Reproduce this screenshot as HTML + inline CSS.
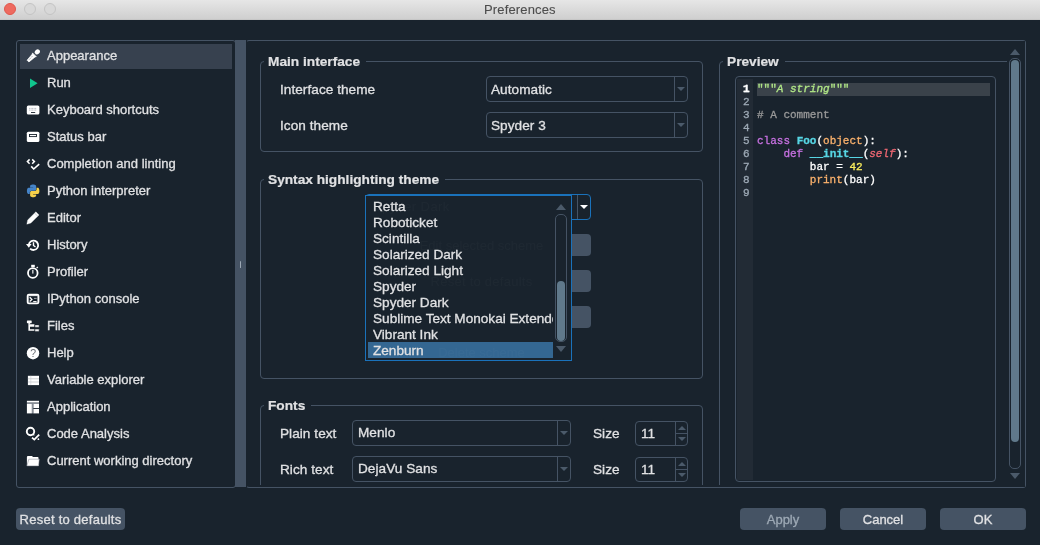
<!DOCTYPE html>
<html><head><meta charset="utf-8">
<style>
*{margin:0;padding:0;box-sizing:border-box}
html,body{width:1040px;height:545px;overflow:hidden;background:#19232D}
body{position:relative;will-change:transform;font-family:"Liberation Sans",sans-serif;font-size:13px;color:#E0E1E3}
.t,.btn,.code{-webkit-text-stroke:0.3px currentColor}
.a{position:absolute}
.t{position:absolute;white-space:nowrap;line-height:15px;height:15px}
.b{font-weight:bold}
.r{font-size:13.6px;letter-spacing:0.05px}
.titlebar{left:0;top:0;width:1040px;height:20px;background:linear-gradient(#E6E6E6,#CFCFCF);border-bottom:1px solid #C6C6C6}
.tl{position:absolute;top:3px;width:12px;height:12px;border-radius:50%}
.frame{position:absolute;border:1px solid #455364;border-radius:3px}
.grp{position:absolute;border:1px solid #455364;border-radius:4px}
.gtitle{position:absolute;background:#19232D;padding:0 6px 0 4px;font-weight:bold;font-size:13.7px;-webkit-text-stroke:0.2px currentColor;line-height:15px;white-space:nowrap}
.combo{position:absolute;border:1px solid #455364;border-radius:4px;height:26px}
.combo .sep{position:absolute;top:0;bottom:0;width:1px;background:#455364}
.arr{position:absolute;width:0;height:0;border-left:4px solid transparent;border-right:4px solid transparent;border-top:4px solid #4B5A6A}
.btn{position:absolute;background:#455364;border-radius:4px;height:22px;text-align:center;line-height:23px}
.code{position:absolute;font-family:"Liberation Mono",monospace;font-size:11px;line-height:13px;white-space:pre}
svg{position:absolute;overflow:visible}
</style></head><body>

<!-- title bar -->
<div class="a titlebar"></div>
<div class="tl" style="left:4px;background:#EE6A5F;border:1px solid #E0574C"></div>
<div class="tl" style="left:24px;background:#D8D8D8;border:1px solid #C4C4C4"></div>
<div class="tl" style="left:44px;background:#D8D8D8;border:1px solid #C4C4C4"></div>
<div class="t" style="left:484px;top:2px;color:#4D4D4D;letter-spacing:0.15px;-webkit-text-stroke:0.1px #4D4D4D">Preferences</div>

<!-- sidebar -->
<div class="frame" style="left:16px;top:40px;width:220px;height:448px"></div>
<div class="a" style="left:20px;top:44px;width:212px;height:25px;background:#37414F"></div>
<svg style="left:0;top:0" width="240" height="545" viewBox="0 0 240 545">
<g fill="#fff" stroke="none">
<!-- appearance eyedropper -->
<polygon points="32.5,52.9 36.3,56.7 35.1,56.9 28.9,62.0 27.1,60.2 32.3,54.1" stroke="#fff" stroke-width="0.7" stroke-linejoin="round"/>
<ellipse cx="37.3" cy="51.9" rx="2.3" ry="2.8" transform="rotate(45 37.3 51.9)"/>
<line x1="34.5" y1="53.1" x2="35.9" y2="54.5" stroke="#37414F" stroke-width="0.5"/>
<line x1="28.8" y1="59.9" x2="32.6" y2="56.1" stroke="#5b6470" stroke-width="0.7" stroke-dasharray="0.8 0.6"/>
<!-- run -->
<polygon points="30,78.5 37.6,83.2 30,88" fill="#10C58D"/>
<!-- keyboard -->
<rect x="26.8" y="105.4" width="12.6" height="9.2" rx="1.6"/>
<line x1="29.2" y1="108.4" x2="36.8" y2="108.4" stroke="#9aa0a8" stroke-width="0.8" stroke-dasharray="0.9 0.6"/>
<line x1="29.2" y1="110.1" x2="36.8" y2="110.1" stroke="#9aa0a8" stroke-width="0.8" stroke-dasharray="0.9 0.6"/>
<line x1="31" y1="112.5" x2="35.2" y2="112.5" stroke="#19232D" stroke-width="0.9"/>
<!-- status bar -->
<rect x="26.8" y="131.7" width="12.6" height="10.4" rx="1.6"/>
<rect x="29.5" y="134.5" width="7" height="2.1" fill="none" stroke="#19232D" stroke-width="0.9"/>
<!-- completion -->
<polyline points="29.6,159.4 27.4,161.6 29.6,163.8" fill="none" stroke="#fff" stroke-width="1.5"/>
<polyline points="32.2,159.4 34.4,161.6 32.2,163.8" fill="none" stroke="#fff" stroke-width="1.5"/>
<polyline points="31.2,166.4 33.7,169 39.2,164.1" fill="none" stroke="#fff" stroke-width="1.6"/>
<!-- python -->
<g transform="translate(26.8,184.6) scale(0.1145)">
<path fill="#4584C8" d="M54.9,0.0 C50.3,0.0 46.0,0.4 42.2,1.1 C30.9,3.1 28.9,7.2 28.9,14.9 V25.1 H55.4 V28.5 H28.9 H19.0 C11.3,28.5 4.6,33.1 2.5,41.9 C0.1,52.0 0.0,58.3 2.5,68.8 C4.4,76.7 8.9,82.3 16.6,82.3 H25.7 V70.3 C25.7,61.5 33.3,53.8 42.2,53.8 H68.7 C76.0,53.8 81.9,47.7 81.9,40.4 V14.9 C81.9,7.7 75.8,2.3 68.7,1.1 C64.1,0.3 59.4,0.0 54.9,0.0 Z"/>
<path fill="#F6D04A" d="M85.3,28.5 V40.2 C85.3,49.3 77.6,56.9 68.7,56.9 H42.2 C34.9,56.9 28.9,63.1 28.9,70.3 V95.6 C28.9,102.8 35.2,107.1 42.2,109.1 C50.6,111.6 58.7,112.0 68.7,109.1 C75.4,107.2 81.9,103.3 81.9,95.6 V85.5 H55.4 V82.1 H81.9 H95.2 C102.9,82.1 105.8,76.7 108.4,68.8 C111.2,60.6 111.0,52.8 108.4,41.9 C106.5,34.1 102.9,28.5 95.2,28.5 Z"/>
</g>
<!-- editor pencil -->
<polygon points="26.8,224.2 27.7,219.9 35.9,211.8 39.0,214.9 30.9,223.1" stroke="#fff" stroke-width="0.3" stroke-linejoin="round"/>
<line x1="34.7" y1="213.2" x2="37.6" y2="216.1" stroke="#8a9099" stroke-width="0.5"/>
<!-- history -->
<path d="M28.8,244.6 A4.7,4.7 0 1 1 30.1,248.6" fill="none" stroke="#fff" stroke-width="1.8"/>
<polygon points="26.0,244.0 31.6,244.0 28.8,247.8"/>
<polyline points="33.5,242.2 33.5,245.5 35.5,247.0" fill="none" stroke="#fff" stroke-width="1.4"/>
<!-- profiler -->
<circle cx="32.8" cy="273" r="4.8" fill="none" stroke="#fff" stroke-width="1.8"/>
<rect x="31.2" y="264.8" width="3.6" height="2.4"/>
<rect x="32.3" y="269.8" width="1.1" height="3.8"/>
<line x1="36.6" y1="268.2" x2="37.8" y2="267" stroke="#fff" stroke-width="1.2"/>
<!-- ipython console -->
<rect x="27.7" y="294.6" width="10.7" height="8.8" rx="1.2" fill="none" stroke="#fff" stroke-width="1.9"/>
<rect x="28.6" y="295.2" width="8.9" height="0.9"/>
<polyline points="29.7,297.3 31.9,299.4 29.7,301.5" fill="none" stroke="#fff" stroke-width="1.3"/>
<line x1="33.2" y1="301.6" x2="36.6" y2="301.6" stroke="#fff" stroke-width="1.1"/>
<line x1="34.0" y1="298.4" x2="36.6" y2="298.4" stroke="#ddd" stroke-width="0.7"/>
<!-- files -->
<rect x="26.9" y="320.4" width="4.8" height="2.8" rx="0.6"/>
<rect x="28.4" y="323" width="1.5" height="1.5"/>
<path d="M28.4,324.3 H34.4 V326.7 H30.0 V329.2 H34.4 V330.7 H28.4 Z"/>
<rect x="34.9" y="324.9" width="4.2" height="2.3" rx="0.4" stroke="#19232D" stroke-width="0.5"/>
<rect x="34.9" y="329.1" width="4.2" height="2.3" rx="0.4" stroke="#19232D" stroke-width="0.5"/>
<!-- help -->
<circle cx="33" cy="353.2" r="6.2"/>
<text x="33.1" y="357" font-family="Liberation Sans" font-size="10.5" text-anchor="middle" fill="#6a6f75">?</text>
<!-- variable explorer -->
<rect x="27.9" y="375.8" width="11.1" height="9.3"/>
<line x1="27.9" y1="378.8" x2="39" y2="378.8" stroke="#b9bdc2" stroke-width="0.7"/>
<line x1="27.9" y1="382" x2="39" y2="382" stroke="#b9bdc2" stroke-width="0.7"/>
<line x1="30.8" y1="375.8" x2="30.8" y2="385.1" stroke="#c9ccd0" stroke-width="0.6"/>
<!-- application -->
<rect x="26.9" y="400.8" width="12.1" height="1.8"/>
<rect x="26.9" y="403.8" width="5" height="9.6"/>
<rect x="33.3" y="403.8" width="5.7" height="4.3"/>
<rect x="33.3" y="409" width="5.7" height="4.4"/>
<rect x="26.9" y="402.6" width="12.1" height="1.2" fill="#9aa0a8"/>
<rect x="31.9" y="403.8" width="1.4" height="9.6" fill="#8a9099"/>
<!-- code analysis -->
<circle cx="30.5" cy="431.5" r="3.7" fill="none" stroke="#fff" stroke-width="1.9"/>
<line x1="33.2" y1="434.2" x2="34.3" y2="435.3" stroke="#fff" stroke-width="1.2"/>
<polyline points="32.0,437.6 34.3,439.6 39.2,434.6" fill="none" stroke="#fff" stroke-width="1.8"/>
<circle cx="38.4" cy="439.2" r="0.9"/>
<!-- folder -->
<path d="M26.9,457 Q26.9,455.9 28,455.9 L32,455.9 L33,456.9 L37.6,456.9 Q38.5,456.9 38.5,457.8 L38.5,465.9 L26.9,465.9 Z"/>
<path d="M28.8,459.2 L39.3,459.2 L38.5,465.9 L26.9,465.9 Z" fill="#fff" stroke="#7c838c" stroke-width="0.5"/>
</g>
</svg>

<div id="side">
<div class="t" style="left:47px;top:48px">Appearance</div>
<div class="t" style="left:47px;top:75px">Run</div>
<div class="t" style="left:47px;top:102px">Keyboard shortcuts</div>
<div class="t" style="left:47px;top:129px">Status bar</div>
<div class="t" style="left:47px;top:156px">Completion and linting</div>
<div class="t" style="left:47px;top:183px">Python interpreter</div>
<div class="t" style="left:47px;top:210px">Editor</div>
<div class="t" style="left:47px;top:237px">History</div>
<div class="t" style="left:47px;top:264px">Profiler</div>
<div class="t" style="left:47px;top:291px">IPython console</div>
<div class="t" style="left:47px;top:318px">Files</div>
<div class="t" style="left:47px;top:345px">Help</div>
<div class="t" style="left:47px;top:372px">Variable explorer</div>
<div class="t" style="left:47px;top:399px">Application</div>
<div class="t" style="left:47px;top:426px">Code Analysis</div>
<div class="t" style="left:47px;top:453px">Current working directory</div>
</div>

<!-- splitter -->
<div class="a" style="left:235px;top:40px;width:10.5px;height:447px;background:#455364"></div>
<div class="a" style="left:240px;top:261px;width:1px;height:7px;background:#9DA9B5;border-radius:1px"></div>

<!-- right panel frame -->
<div class="frame" style="left:246px;top:40px;width:780px;height:448px;border-left-color:transparent"></div>

<div class="a" style="left:247px;top:41px;width:760px;height:444px;overflow:hidden"><div class="a" style="left:-247px;top:-41px;width:1040px;height:545px">
<!-- Main interface -->
<div class="grp" style="left:260px;top:61px;width:443px;height:91px"></div>
<div class="gtitle" style="left:264px;top:54px">Main interface</div>
<div class="t r" style="left:280px;top:82px">Interface theme</div>
<div class="t r" style="left:280px;top:118px">Icon theme</div>
<div class="combo" style="left:486px;top:76px;width:202px"><div class="sep" style="left:187px"></div><div class="arr" style="left:190px;top:10px"></div></div>
<div class="t r" style="left:491px;top:82px">Automatic</div>
<div class="combo" style="left:486px;top:112px;width:202px"><div class="sep" style="left:187px"></div><div class="arr" style="left:190px;top:10px"></div></div>
<div class="t r" style="left:491px;top:118px">Spyder 3</div>

<!-- Syntax highlighting theme -->
<div class="grp" style="left:260px;top:179px;width:443px;height:200px"></div>
<div class="gtitle" style="left:264px;top:172px">Syntax highlighting theme</div>


<!-- syntax combo + buttons (behind popup) -->
<div class="combo" style="left:365px;top:194px;width:226px;height:26px;border-color:#1A72BB"><div class="sep" style="left:211px;background:#455364"></div></div>
<div class="arr" style="left:580px;top:205px;border-top-color:#fff;border-left-width:4px;border-right-width:4px;border-top-width:4px"></div>
<div class="btn" style="left:420px;top:234px;width:171px"></div>
<div class="btn" style="left:420px;top:270px;width:171px"></div>
<div class="btn" style="left:420px;top:306px;width:171px"></div>
<!-- popup -->
<div class="a" style="left:365px;top:195px;width:207px;height:166px;background:#19232D;border:1px solid #1A72BB"></div>
<div class="a" style="left:368px;top:342px;width:185px;height:16px;background:#346792"></div>
<div class="t r" style="left:373px;top:199px;letter-spacing:0">Retta</div>
<div class="t r" style="left:373px;top:215px;letter-spacing:0">Roboticket</div>
<div class="t r" style="left:373px;top:231px;letter-spacing:0">Scintilla</div>
<div class="t r" style="left:373px;top:247px;letter-spacing:0">Solarized Dark</div>
<div class="t r" style="left:373px;top:263px;letter-spacing:0">Solarized Light</div>
<div class="t r" style="left:373px;top:279px;letter-spacing:0">Spyder</div>
<div class="t r" style="left:373px;top:295px;letter-spacing:0">Spyder Dark</div>
<div class="a" style="left:373px;top:311px;width:180px;height:15px;overflow:hidden"><div class="t r" style="left:0;top:0;letter-spacing:0">Sublime Text Monokai Extended</div></div>
<div class="t r" style="left:373px;top:327px;letter-spacing:0">Vibrant Ink</div>
<div class="t r" style="left:373px;top:343px;letter-spacing:0">Zenburn</div>
<div class="t" style="left:373px;top:199px;color:#E0E1E3;opacity:0.022;-webkit-text-stroke:0;letter-spacing:0.4px">Spyder Dark</div>
<div class="t" style="left:372px;width:219px;text-align:center;top:238px;opacity:0.022;-webkit-text-stroke:0;">Edit selected scheme</div>
<div class="t" style="left:372px;width:219px;text-align:center;top:274px;opacity:0.022;-webkit-text-stroke:0;letter-spacing:0.25px">Reset to defaults</div>
<div class="t" style="left:372px;width:219px;text-align:center;top:345px;opacity:0.022;-webkit-text-stroke:0;">Delete scheme</div>
<div class="arr" style="left:556px;top:204px;border-left-width:5px;border-right-width:5px;border-top:0;border-bottom:6px solid #4B5A6A"></div>
<div class="a" style="left:555px;top:214px;width:12px;height:128px;border:1px solid #455364;border-radius:5px"></div>
<div class="a" style="left:557px;top:281px;width:8px;height:60px;background:#60798B;border-radius:4px"></div>
<div class="arr" style="left:556px;top:346px;border-left-width:5px;border-right-width:5px;border-top:6px solid #4B5A6A"></div>

<!-- Fonts -->
<div class="grp" style="left:260px;top:405px;width:443px;height:100px"></div>
<div class="gtitle" style="left:264px;top:398px">Fonts</div>
<div class="t r" style="left:280px;top:426px">Plain text</div>
<div class="t r" style="left:280px;top:462px">Rich text</div>
<div class="combo" style="left:352px;top:420px;width:219px"><div class="sep" style="left:204px"></div><div class="arr" style="left:207px;top:10px"></div></div>
<div class="t r" style="left:358px;top:425px">Menlo</div>
<div class="combo" style="left:352px;top:456px;width:219px"><div class="sep" style="left:204px"></div><div class="arr" style="left:207px;top:10px"></div></div>
<div class="t r" style="left:358px;top:461px">DejaVu Sans</div>
<div class="t r" style="left:593px;top:426px">Size</div>
<div class="t r" style="left:593px;top:462px">Size</div>
<div class="combo" style="left:635px;top:421px;width:53px;height:25px"><div class="sep" style="left:39px"></div><div class="a" style="left:39px;top:11px;width:13px;height:1px;background:#455364"></div><div class="arr" style="left:42px;top:4px;border-left-width:4px;border-right-width:4px;border-top:0;border-bottom:4px solid #4B5A6A"></div><div class="arr" style="left:42px;top:15px;border-left-width:4px;border-right-width:4px;border-top:4px solid #4B5A6A"></div></div>
<div class="t r" style="left:641px;top:426px">11</div>
<div class="combo" style="left:635px;top:457px;width:53px;height:25px"><div class="sep" style="left:39px"></div><div class="a" style="left:39px;top:11px;width:13px;height:1px;background:#455364"></div><div class="arr" style="left:42px;top:4px;border-left-width:4px;border-right-width:4px;border-top:0;border-bottom:4px solid #4B5A6A"></div><div class="arr" style="left:42px;top:15px;border-left-width:4px;border-right-width:4px;border-top:4px solid #4B5A6A"></div></div>
<div class="t r" style="left:641px;top:462px">11</div>


<!-- Preview -->
<div class="grp" style="left:719px;top:61px;width:320px;height:440px"></div>
<div class="gtitle" style="left:723px;top:54px">Preview</div>
<div class="frame" style="left:735px;top:76px;width:261px;height:406px;border-radius:4px"></div>
<div class="a" style="left:737px;top:79px;width:16px;height:401px;background:#222B35"></div>
<div class="a" style="left:757px;top:83px;width:233px;height:13px;background:#3A424A"></div>
<div class="code" style="left:743px;top:83px;color:#9DA9B5">1
2
3
4
5
6
7
8
9</div>
<div class="code" style="left:743px;top:83px;color:#fff;font-weight:bold">1</div>
<div class="code" style="left:757px;top:83px;color:#fff"><span style="color:#b0e686">"""</span><i style="color:#b0e686">A string</i><span style="color:#b0e686">"""</span>

<span style="color:#999">#</span><span style="color:#999"> A comment</span>

<span style="color:#c670e0">class</span> <b style="color:#57d6e4">Foo</b>(<span style="color:#fab16c">object</span>):
    <span style="color:#c670e0">def</span> <b style="color:#57d6e4">__init__</b>(<i style="color:#ee6772">self</i>):
        bar = <span style="color:#faed5c">42</span>
        <span style="color:#fab16c">print</span>(bar)
</div>

</div></div>
<!-- right scrollbar of scroll area -->
<div class="a" style="left:1009px;top:41px;width:16px;height:446px;background:#19232D"></div>
<div class="arr" style="left:1010px;top:49px;border-left-width:5px;border-right-width:5px;border-top:0;border-bottom:6px solid #4B5A6A"></div>
<div class="a" style="left:1009px;top:58px;width:12px;height:411px;border:1px solid #455364;border-radius:5px"></div>
<div class="a" style="left:1011px;top:60px;width:8px;height:382px;background:#60798B;border-radius:4px"></div>
<div class="arr" style="left:1010px;top:473px;border-left-width:5px;border-right-width:5px;border-top:6px solid #4B5A6A"></div>

<!-- bottom buttons -->
<div class="btn" style="left:16px;top:508px;width:109px;letter-spacing:0.25px">Reset to defaults</div>
<div class="btn" style="left:740px;top:508px;width:86px;color:#9DA9B5">Apply</div>
<div class="btn" style="left:840px;top:508px;width:86px">Cancel</div>
<div class="btn" style="left:940px;top:508px;width:86px">OK</div>

</body></html>
